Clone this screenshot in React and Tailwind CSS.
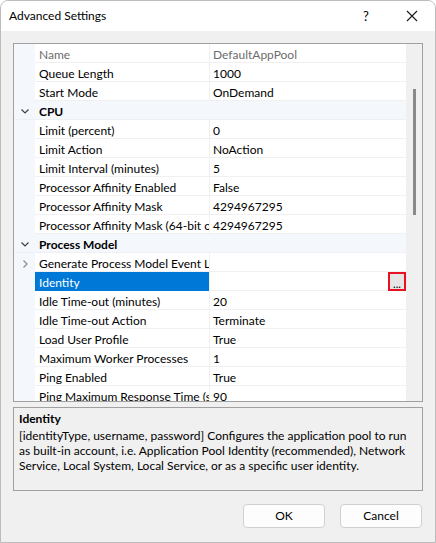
import React from "react";

const rows = [
  { t: "item", name: "Name", value: "DefaultAppPool", gray: true },
  { t: "item", name: "Queue Length", value: "1000" },
  { t: "item", name: "Start Mode", value: "OnDemand" },
  { t: "cat", name: "CPU" },
  { t: "item", name: "Limit (percent)", value: "0" },
  { t: "item", name: "Limit Action", value: "NoAction" },
  { t: "item", name: "Limit Interval (minutes)", value: "5" },
  { t: "item", name: "Processor Affinity Enabled", value: "False" },
  { t: "item", name: "Processor Affinity Mask", value: "4294967295" },
  { t: "item", name: "Processor Affinity Mask (64-bit option)", value: "4294967295" },
  { t: "cat", name: "Process Model" },
  { t: "item", name: "Generate Process Model Event Log Entry", value: "", expand: true },
  { t: "item", name: "Identity", value: "", selected: true },
  { t: "item", name: "Idle Time-out (minutes)", value: "20" },
  { t: "item", name: "Idle Time-out Action", value: "Terminate" },
  { t: "item", name: "Load User Profile", value: "True" },
  { t: "item", name: "Maximum Worker Processes", value: "1" },
  { t: "item", name: "Ping Enabled", value: "True" },
  { t: "item", name: "Ping Maximum Response Time (seconds)", value: "90" },
];

function ChevronDown() {
  return (
    <svg width="10" height="10" viewBox="0 0 10 10" className="block">
      <path d="M1.5 3.5 L5 7 L8.5 3.5" fill="none" stroke="#404040" strokeWidth="1.2" />
    </svg>
  );
}
function ChevronRight() {
  return (
    <svg width="10" height="10" viewBox="0 0 10 10" className="block">
      <path d="M3.5 1.5 L7 5 L3.5 8.5" fill="none" stroke="#8a8a8a" strokeWidth="1.2" />
    </svg>
  );
}

function Row({ r }) {
  if (r.t === "cat") {
    return (
      <div className="flex h-[19px] shrink-0 bg-[#f4f7fc] border-b border-[#eef0f3]">
        <div className="w-[21px] flex items-center justify-center pt-[2px]">
          <ChevronDown />
        </div>
        <div className="pl-[4px] pt-[4px] flex items-center font-bold text-black">{r.name}</div>
      </div>
    );
  }
  return (
    <div className="flex h-[19px] shrink-0">
      <div className="w-[21px] shrink-0 bg-[#f4f7fc] flex items-center justify-center pt-[2px]">
        {r.expand ? <ChevronRight /> : null}
      </div>
      <div
        className={
          "w-[174px] shrink-0 pl-[4px] pt-[3px] flex items-center overflow-hidden whitespace-nowrap border-b " +
          (r.selected
            ? "bg-[#0078d7] text-white border-[#0078d7]"
            : r.gray
            ? "text-[#6d6d6d] border-[#f0f0f0]"
            : "text-black border-[#f0f0f0]")
        }
      >
        {r.name}
      </div>
      <div className="w-[1px] shrink-0 bg-[#f0f0f0]" />
      <div
        className={
          "flex-1 pl-[3px] pt-[3px] flex items-center border-b border-[#f0f0f0] relative " +
          (r.gray ? "text-[#6d6d6d]" : "text-black")
        }
      >
        {r.value}
        {r.selected ? (
          <div className="absolute right-[0px] top-[0px] w-[18px] h-[19px] border-2 border-[#e81123] bg-[#e5e5e5] flex items-center justify-center text-[11px] leading-none text-black">
            <span className="mt-[3px]">...</span>
          </div>
        ) : null}
      </div>
    </div>
  );
}

export default function App() {
  return (
    <div
      className="w-[436px] h-[543px] bg-[#f0f0f0] border border-[#bcbcbc] rounded-t-[8px] overflow-hidden flex flex-col text-[12px] leading-none"
      style={{ fontFamily: 'Lato, "Noto Sans", sans-serif' }}
    >
      <div className="h-[30px] bg-white flex items-center shrink-0">
        <div className="pl-[8px] text-[12px] text-black flex-1">Advanced Settings</div>
        <div className="w-[46px] text-center text-[13px] text-black">?</div>
        <div className="w-[46px] flex items-center justify-center">
          <svg width="12" height="12" viewBox="0 0 12 12">
            <path d="M1 1 L11 11 M11 1 L1 11" stroke="#1a1a1a" strokeWidth="1.1" fill="none" />
          </svg>
        </div>
      </div>
      <div className="flex-1 flex flex-col px-[12px] pt-[12px] text-[12px]">
        <div className="h-[359px] shrink-0 border border-[#a0a0a0] bg-white flex overflow-hidden">
          <div className="flex-1 flex flex-col overflow-hidden">
            {rows.map((r, i) => (
              <Row key={i} r={r} />
            ))}
          </div>
          <div className="w-[16px] bg-[#f0f0f0] flex justify-center pt-[45px]">
            <div className="w-[3px] h-[126px] bg-[#8a8a8a] ml-[1px]" />
          </div>
        </div>
        <div className="mt-[5px] h-[84px] shrink-0 border border-[#a0a0a0] px-[5px] pt-[3px]">
          <div className="font-bold text-black leading-[15px]">Identity</div>
          <div className="text-black leading-[15px] mt-[2px] whitespace-nowrap">
            <div>[identityType, username, password] Configures the application pool to run</div>
            <div>as built-in account, i.e. Application Pool Identity (recommended), Network</div>
            <div>Service, Local System, Local Service, or as a specific user identity.</div>
          </div>
        </div>
        <div className="flex justify-end gap-[15px] mt-[13px] pr-[1px]">
          <div className="w-[82px] h-[24px] bg-[#fdfdfd] border border-[#d0d0d0] rounded-[4px] flex items-center justify-center text-black">
            OK
          </div>
          <div className="w-[82px] h-[24px] bg-[#fdfdfd] border border-[#d0d0d0] rounded-[4px] flex items-center justify-center text-black">
            Cancel
          </div>
        </div>
      </div>
    </div>
  );
}
